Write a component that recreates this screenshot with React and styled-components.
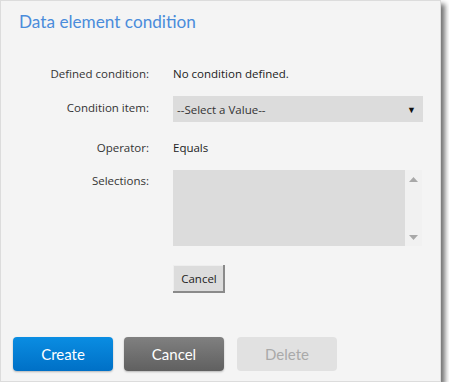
import React from "react";
import styled, { createGlobalStyle } from "styled-components";

const Global = createGlobalStyle`
  html, body { margin: 0; padding: 0; background: #ffffff; }
  * { box-sizing: border-box; }
`;

const Dialog = styled.div`
  width: 441px;
  height: 382px;
  background: #f4f4f4;
  border: 1px solid #dcdcdc;
  box-shadow: 4px 4px 5px rgba(0, 0, 0, 0.55);
  display: flex;
  flex-direction: column;
  font-family: "Open Sans", "Noto Sans", sans-serif;
`;

const Title = styled.h1`
  margin: 0;
  padding: 10px 0 0 18px;
  font-family: Lato, sans-serif;
  font-weight: 400;
  font-size: 17.2px;
  color: #4a8cdb;
  line-height: 22px;
`;

const Form = styled.div`
  display: grid;
  grid-template-columns: 148px 250px;
  column-gap: 24px;
  align-items: center;
  margin-top: 30px;
  font-size: 11.5px;
`;

const Label = styled.div`
  text-align: right;
  color: #333;
  align-self: ${(p) => (p.$top ? "start" : "center")};
  padding-top: ${(p) => (p.$top ? "3px" : "0")};
  height: ${(p) => p.$h || "auto"};
  display: flex;
  align-items: center;
  justify-content: flex-end;
`;

const Value = styled.div`
  color: #222;
  height: ${(p) => p.$h || "auto"};
  display: flex;
  align-items: center;
`;

const Select = styled.div`
  height: 26px;
  width: 250px;
  background: #dcdcdc;
  display: flex;
  align-items: center;
  justify-content: space-between;
  padding: 0 7px 0 4px;
  color: #333;
`;

const Arrow = styled.span`
  font-size: 9px;
  color: #111;
`;

const ListBox = styled.div`
  width: 249px;
  height: 76px;
  background: #dcdcdc;
  display: flex;
  justify-content: flex-end;
`;

const ScrollBar = styled.div`
  width: 17px;
  background: #f1f1f1;
  display: flex;
  flex-direction: column;
  justify-content: space-between;
  align-items: center;
  padding: 7px 0 6px;
`;

const SmallButton = styled.button`
  width: 52px;
  height: 28px;
  background: #dcdcdc;
  border: none;
  box-shadow: inset -2px -2px 0 #8a8a8a, inset 1px 1px 0 #eeeeee;
  font-family: "Open Sans", "Noto Sans", sans-serif;
  font-size: 11.5px;
  color: #222;
  padding: 0 0 2px 0;
`;

const Spacer = styled.div`
  height: ${(p) => p.$h}px;
`;

const Footer = styled.div`
  margin-top: auto;
  padding: 0 0 10px 12px;
  display: flex;
  gap: 11px;
`;

const ActionButton = styled.button`
  width: 100px;
  height: 34px;
  border: none;
  border-radius: 4px;
  font-family: Lato, sans-serif;
  font-size: 15px;
  margin-right: ${(p) => (p.$variant === "secondary" ? "2px" : "0")};
  color: ${(p) => (p.$variant === "disabled" ? "#a9a9a9" : "#fff")};
  background: ${(p) =>
    p.$variant === "primary"
      ? "linear-gradient(#0a8de2, #0070c6)"
      : p.$variant === "secondary"
      ? "linear-gradient(#808080, #606060)"
      : "#e1e1e1"};
  box-shadow: ${(p) =>
    p.$variant === "disabled" ? "none" : "0 1px 2px rgba(0,0,0,0.25)"};
`;

const Tri = ({ up }) => (
  <svg width="9" height="5" viewBox="0 0 9 5">
    <polygon points={up ? "0,5 9,5 4.5,0" : "0,0 9,0 4.5,5"} fill="#a8a8a8" />
  </svg>
);

export default function App() {
  return (
    <>
      <Global />
      <Dialog>
        <Title>Data element condition</Title>
        <Form>
          <Label $h="20px">Defined condition:</Label>
          <Value $h="20px">No condition defined.</Value>
          <Spacer $h={13} />
          <Spacer $h={13} />
          <Label $top $h="20px">Condition item:</Label>
          <Select>
            <span>--Select a Value--</span>
            <Arrow>▼</Arrow>
          </Select>
          <Spacer $h={15} />
          <Spacer $h={15} />
          <Label $h="20px">Operator:</Label>
          <Value $h="20px">Equals</Value>
          <Spacer $h={13} />
          <Spacer $h={13} />
          <Label $top>Selections:</Label>
          <ListBox>
            <ScrollBar>
              <Tri up />
              <Tri />
            </ScrollBar>
          </ListBox>
          <Spacer $h={19} />
          <Spacer $h={19} />
          <div />
          <div>
            <SmallButton>Cancel</SmallButton>
          </div>
        </Form>
        <Footer>
          <ActionButton $variant="primary">Create</ActionButton>
          <ActionButton $variant="secondary">Cancel</ActionButton>
          <ActionButton $variant="disabled">Delete</ActionButton>
        </Footer>
      </Dialog>
    </>
  );
}
